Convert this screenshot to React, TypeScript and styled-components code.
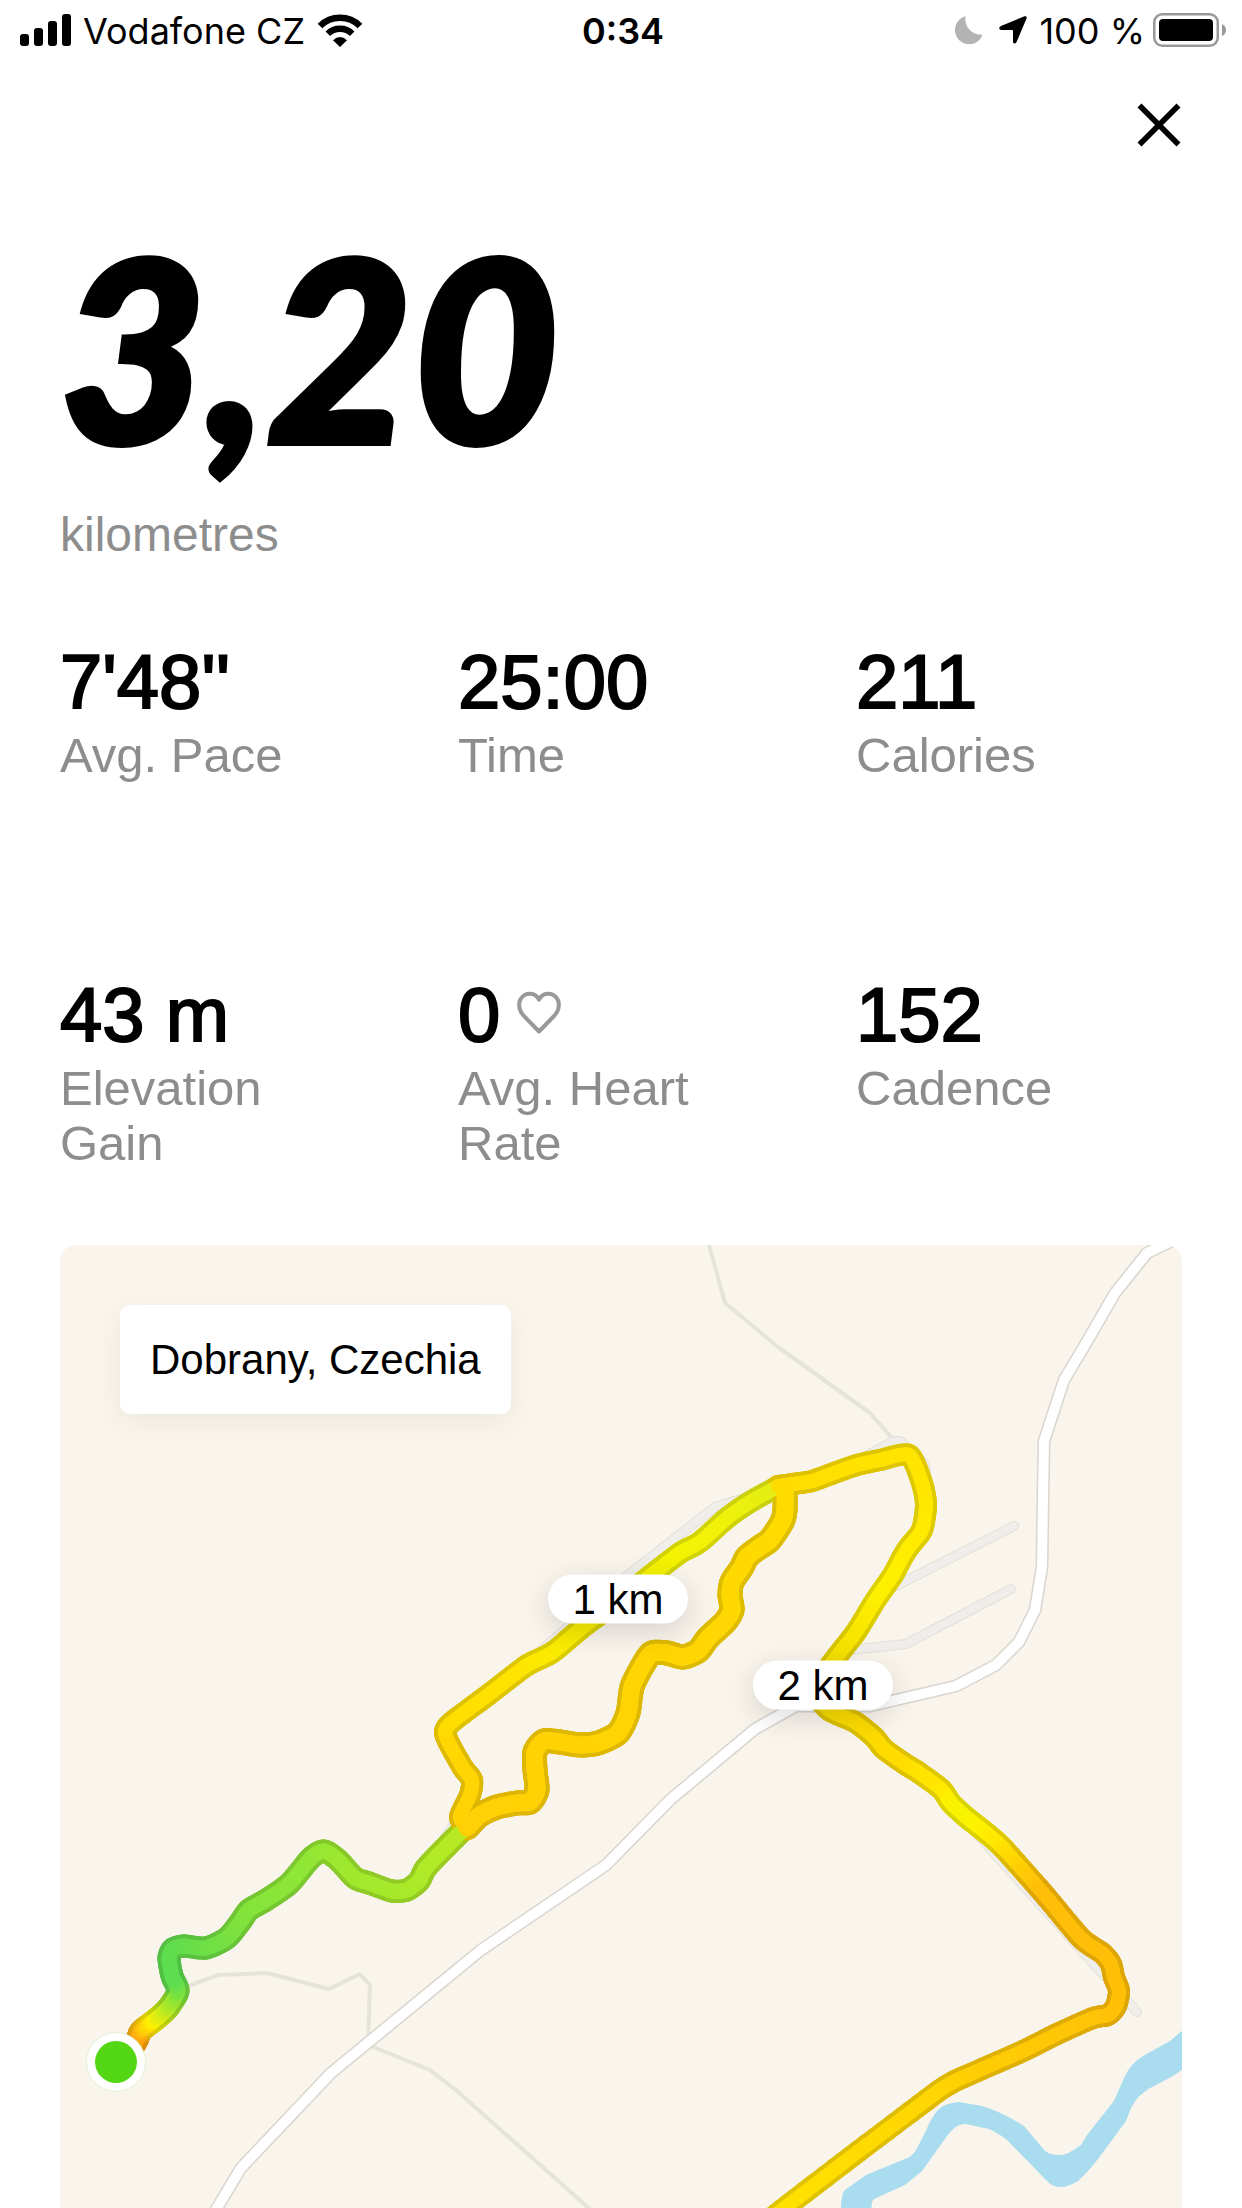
import React from "react";
import styled, { createGlobalStyle } from "styled-components";

const GlobalStyle = createGlobalStyle`
  *, *::before, *::after { box-sizing: border-box; }
  body {
    margin: 0;
    background: #ffffff;
    color: #000000;
    font-family: "Liberation Sans", Arial, sans-serif;
  }
  h1, p, dl, dt, dd { margin: 0; }
`;

const Screen = styled.main`
  display: flex;
  flex-direction: column;
`;

const StatusBar = styled.header`
  display: grid;
  grid-template-columns: 1fr auto 1fr;
  align-items: center;
  height: 64px;
  padding: 0 16px 4px 20px;
  font-family: Inter, sans-serif;
  font-size: 36px;
  line-height: 44px;
`;

const StatusGroup = styled.div<{ $end?: boolean }>`
  display: flex;
  align-items: center;
  justify-content: ${(p) => (p.$end ? "flex-end" : "flex-start")};
  gap: ${(p) => (p.$end ? "8px" : "12px")};
  svg { display: block; flex: none; }
`;

const Indicators = styled.span`
  display: flex;
  gap: 16px;
  margin-right: 4px;
`;

const StatusText = styled.span`
  padding-top: 2px;
`;

const Clock = styled.time`
  padding-top: 2px;
  font-weight: 600;
`;

const Toolbar = styled.div`
  display: flex;
  justify-content: flex-end;
  padding: 30px 52px 62px;
`;

const CloseButton = styled.button`
  display: grid;
  place-items: center;
  width: 62px;
  height: 62px;
  padding: 0;
  border: 0;
  background: none;
  cursor: pointer;
`;

const Content = styled.div`
  display: flex;
  flex-direction: column;
  padding: 0 60px;
`;

const Distance = styled.h1`
  font-family: Lato, sans-serif;
  font-size: 252px;
  font-weight: 900;
  font-style: italic;
  line-height: 256px;
  -webkit-text-stroke: 6px #000000;
`;

const Unit = styled.p`
  margin-top: 33px;
  color: #8d8d8d;
  font-size: 48px;
  line-height: 55px;
`;

const Stats = styled.dl`
  display: grid;
  grid-template-columns: repeat(3, 1fr);
  grid-auto-rows: 1fr;
  column-gap: 72px;
  row-gap: 137px;
  margin-top: 80px;
`;

const Stat = styled.div`
  display: flex;
  flex-direction: column-reverse;
  justify-content: flex-end;
  gap: 6px;
`;

const StatValue = styled.dd`
  display: flex;
  align-items: center;
  gap: 17px;
  font-size: 76px;
  line-height: 80px;
  -webkit-text-stroke: 2px #000000;
`;

const StatLabel = styled.dt`
  padding-right: 40px;
  color: #8d8d8d;
  font-size: 49px;
  line-height: 55px;
`;

const MapCard = styled.section`
  position: relative;
  margin-top: 74px;
  overflow: hidden;
  border-radius: 16px 16px 0 0;
  background: #f9f4ec;
`;

const MapDrawing = styled.svg`
  display: block;
  width: 100%;
  height: auto;
`;

const Place = styled.p`
  position: absolute;
  top: 60px;
  left: 60px;
  padding: 30px;
  border-radius: 10px;
  background: #ffffff;
  box-shadow: 0 8px 30px rgba(0, 0, 0, 0.06);
  font-size: 42px;
  line-height: 49px;
  white-space: nowrap;
`;

const Marker = styled.span`
  position: absolute;
  transform: translate(-50%, -50%);
  min-width: 140px;
  border-radius: 25px;
  background: #ffffff;
  box-shadow: 0 8px 30px rgba(0, 0, 0, 0.14);
  font-size: 42px;
  line-height: 49px;
  text-align: center;
  white-space: nowrap;
`;

const SignalIcon = () => (
  <svg width="51" height="32" viewBox="0 0 51 32" aria-hidden="true">
    <rect x="0" y="20" width="9" height="12" rx="3" />
    <rect x="14" y="14" width="9" height="18" rx="3" />
    <rect x="28" y="7" width="9" height="25" rx="3" />
    <rect x="42" y="0" width="9" height="32" rx="3" />
  </svg>
);

const WifiIcon = () => (
  <svg width="46" height="33" viewBox="0 0 46 33" aria-hidden="true">
    <path d="M3 12 A28.5 28.5 0 0 1 43 12" fill="none" stroke="#000" strokeWidth="6.6" />
    <path d="M10.8 19.8 A17.3 17.3 0 0 1 35.2 19.8" fill="none" stroke="#000" strokeWidth="6.4" />
    <path d="M23 33 L16 26.2 Q23 20 30 26.2 Z" />
  </svg>
);

const MoonIcon = () => (
  <svg width="28" height="28" viewBox="0 0 28 28" aria-hidden="true">
    <path d="M10.6 0.3 A14.2 14.2 0 1 0 27.6 18.6 A15.6 15.6 0 0 1 10.6 0.3 Z" fill="#b3b3b3" />
  </svg>
);

const LocationIcon = () => (
  <svg width="28" height="28" viewBox="0 0 28 28" aria-hidden="true">
    <path d="M25.5 0.3 Q28.4 -0.2 27.5 2.6 L17.6 26 Q16.8 27.8 15 27.4 Q14 27 14 25.5 V15 Q14 14 13 14 H2.3 Q0.3 13.8 0.2 12.2 Q0.2 10.8 2 10 Z" />
  </svg>
);

const BatteryIcon = () => (
  <svg width="73" height="34" viewBox="0 0 73 34" aria-hidden="true">
    <rect x="1.25" y="1.25" width="63.5" height="31.5" rx="8" fill="none" stroke="#999" strokeWidth="2.5" />
    <rect x="6" y="6" width="54" height="22" rx="4" />
    <path d="M69 11 Q73 13 73 17 Q73 21 69 23 Z" fill="#999" />
  </svg>
);

const CloseIcon = () => (
  <svg width="44" height="44" viewBox="0 0 44 44" aria-hidden="true">
    <path d="M2.5 2.5 L41.5 41.5 M41.5 2.5 L2.5 41.5" stroke="#000" strokeWidth="5.6" />
  </svg>
);

const HeartIcon = () => (
  <svg width="44" height="48" viewBox="0 0 44 48" aria-hidden="true">
    <path
      d="M22 40.5 L6.5 24.5 C1 18.5 0.8 10 5.5 5.6 C10.3 1 18.5 1.8 22 8.6 C25.5 1.8 33.7 1 38.5 5.6 C43.2 10 43 18.5 37.5 24.5 Z"
      fill="none"
      stroke="#999"
      strokeWidth="4"
      strokeLinejoin="round"
    />
  </svg>
);

type RoutePoint = [number, number, string?];
type Rgb = [number, number, number];

/* A point may carry a pace colour; colours between those points are blended. */
const WARM_UP: RoutePoint[] = [
  [128, 2056, "#ff8c00"], [137, 2040, "#ff9808"], [141, 2031, "#ffad10"], [155, 2020, "#fff000"],
  [168, 2008, "#c4ea1c"], [178, 1991, "#80e23c"], [172, 1976, "#5cdd52"], [169, 1958],
  [173, 1949], [184, 1946, "#62dd4c"], [206, 1948], [227, 1938], [241, 1921, "#7ee23e"],
  [249, 1910], [266, 1900], [289, 1884], [311, 1858, "#90e636"], [324, 1851], [338, 1860],
  [355, 1878, "#a0e82e"], [369, 1883], [392, 1891], [407, 1890], [419, 1881],
  [426, 1868, "#aeea28"], [446, 1847], [466, 1827, "#b8ea22"],
];

const FIRST_KM: RoutePoint[] = [
  [468, 1828, "#ffd006"], [460, 1817], [470, 1795], [472, 1780], [463, 1768], [450, 1745],
  [445, 1732, "#ffd802"], [452, 1722], [488, 1695], [523, 1668, "#ffe400"], [533, 1662],
  [553, 1652, "#fcea00"], [583, 1627], [617, 1602], [650, 1576, "#f4f200"], [680, 1553],
  [700, 1542], [727, 1518, "#f0f208"], [750, 1502], [777, 1487, "#e4ee14"],
];

const LOOP: RoutePoint[] = [
  [785, 1487, "#ffdc00"], [785, 1510], [782, 1522], [770, 1540], [760, 1547], [747, 1557],
  [742, 1567], [732, 1582], [730, 1595], [732, 1610], [725, 1622], [708, 1638], [698, 1651],
  [683, 1657, "#ffd602"], [667, 1653], [652, 1653], [643, 1665], [632, 1687], [628, 1713],
  [618, 1733], [598, 1743], [580, 1745], [560, 1742], [544, 1741], [535, 1752], [535, 1770],
  [537, 1790], [530, 1802], [517, 1803], [497, 1807], [480, 1815], [467, 1828, "#ffd006"],
];

const SECOND_KM: RoutePoint[] = [
  [778, 1486, "#ffdc00"], [793, 1484], [812, 1481], [834, 1473], [857, 1465], [880, 1460],
  [909, 1455, "#ffe400"], [922, 1483], [926, 1505], [922, 1530], [909, 1547],
  [902, 1558], [893, 1575], [875, 1601, "#fff000"], [856, 1632], [832, 1663], [815, 1690, "#f0d800"],
  [829, 1710], [855, 1722, "#fcdc00"], [874, 1737], [884, 1749], [905, 1764, "#ffdc00"],
  [918, 1772], [941, 1789, "#ffe600"], [951, 1803, "#fff000"], [966, 1817, "#f6f400"],
  [985, 1832, "#fff200"], [1003, 1848, "#ffe600"], [1043, 1893, "#ffbe08"], [1081, 1938],
  [1102, 1953], [1111, 1964], [1114, 1977], [1119, 1991], [1116, 2006], [1108, 2015, "#ffc008"],
  [1093, 2018], [1057, 2034], [1023, 2051, "#ffc806"], [973, 2073], [955, 2081, "#ffd004"],
  [940, 2090], [916, 2108], [851, 2157, "#ffda02"], [782, 2210, "#ffe200"], [750, 2236],
];

const toRgb = (hex: string): Rgb => [1, 3, 5].map((i) => parseInt(hex.slice(i, i + 2), 16)) as Rgb;
const toCss = (c: Rgb, k = 1) => `rgb(${c.map((v) => Math.round(v * k)).join(",")})`;

function blendedColours(points: RoutePoint[]): Rgb[] {
  const stops = points.flatMap((p, i) => (p[2] ? [{ i, c: toRgb(p[2]) }] : []));
  return points.map((_, i) => {
    const before = [...stops].reverse().find((s) => s.i <= i) ?? stops[0];
    const after = stops.find((s) => s.i >= i) ?? before;
    if (after.i === before.i) return before.c;
    const t = (i - before.i) / (after.i - before.i);
    return before.c.map((v, n) => v + (after.c[n] - v) * t) as Rgb;
  });
}

const TANGENT = 0.36;

/* Cardinal spline, cut into short pieces that each take one colour. */
function smooth(points: RoutePoint[], steps = 8) {
  const colours = blendedColours(points);
  const out: { x: number; y: number; c: Rgb }[] = [];
  for (let i = 0; i < points.length - 1; i++) {
    const a = points[Math.max(i - 1, 0)];
    const b = points[i];
    const c = points[i + 1];
    const d = points[Math.min(i + 2, points.length - 1)];
    for (let s = 0; s <= steps; s++) {
      if (s === steps && i < points.length - 2) continue;
      const t = s / steps;
      const t2 = t * t;
      const t3 = t2 * t;
      const at = (n: 0 | 1) =>
        (2 * t3 - 3 * t2 + 1) * b[n] +
        (t3 - 2 * t2 + t) * TANGENT * (c[n] - a[n]) +
        (3 * t2 - 2 * t3) * c[n] +
        (t3 - t2) * TANGENT * (d[n] - b[n]);
      out.push({ x: at(0), y: at(1), c: colours[i].map((v, n) => v + (colours[i + 1][n] - v) * t) as Rgb });
    }
  }
  return out;
}

const LEGS = [
  { points: smooth(WARM_UP), width: 23 },
  { points: smooth(FIRST_KM), width: 22 },
  { points: smooth(SECOND_KM), width: 22 },
  { points: smooth(LOOP), width: 25 },
];

const Strokes = ({ inset, shade }: { inset: number; shade: number }) => (
  <g strokeLinecap="round">
    {LEGS.map((leg, l) =>
      leg.points.slice(1).map((p, i) => (
        <line
          key={`${l}-${i}`}
          x1={leg.points[i].x}
          y1={leg.points[i].y}
          x2={p.x}
          y2={p.y}
          stroke={toCss(p.c, shade)}
          strokeWidth={leg.width - inset}
        />
      ))
    )}
  </g>
);

const TRACKS = [
  "M927 1480 L925 1464 L900 1441 L894 1441 L862 1458 L790 1484 L715 1507 L611 1588 L560 1634 L452 1728",
  "M462 1812 L430 1860",
  "M1014 1526 L880 1594",
  "M1011 1589 L906 1644 L850 1650",
  "M975 1832 L1137 2012",
];
const MAIN_ROAD =
  "M1190 1232 L1147 1253 L1115 1293 L1085 1345 L1064 1380 L1044 1441 L1043 1497 L1042 1567 L1035 1610 L1019 1642 L996 1665 L956 1686 L870 1706 L796 1706 L755 1729 L671 1799 L606 1865 L481 1950 L331 2073 L241 2168 L217 2208 L200 2238";
const FOOTPATHS = [
  "M706 1235 L709 1245 L725 1303 L778 1347 L870 1413 L893 1439",
  "M180 1989 L218 1975 L267 1973 L329 1989 L360 1974 L370 1985 L368 2045 L430 2070 L457 2091 L600 2218",
];
const RIVER =
  "M1190 2024 L1170 2041 L1143 2056 Q1130 2064 1124 2078 L1114 2101 L1087 2135 L1081 2145 Q1068 2155 1060 2155 Q1050 2155 1045 2151 L1024 2126 Q1002 2112 982 2106 L959 2102 Q944 2103 937 2111 Q929 2122 926 2131 L916 2150 Q912 2157 905 2159 L866 2175 L845 2190 Q841 2194 841 2210 L872 2210 Q870 2200 876 2198 L905 2185 L922 2171 L947 2136 Q956 2123 966 2124 L989 2129 Q1000 2134 1008 2141 L1049 2183 Q1060 2192 1078 2181 Q1090 2170 1101 2155 L1126 2121 L1131 2108 Q1136 2098 1143 2093 Q1149 2088 1156 2085 L1173 2076 L1190 2064 Z";

const RouteMap = () => (
  <MapDrawing viewBox="60 1245 1122 963" role="img" aria-label="Map of the run, coloured by pace">
    <path d={RIVER} fill="#a8dcee" />
    <g fill="none" strokeLinejoin="round">
      <g stroke="#e5e4d8" strokeWidth="4">
        {FOOTPATHS.map((d) => <path key={d} d={d} />)}
      </g>
      <g strokeLinecap="round">
        {TRACKS.map((d) => <path key={d} d={d} stroke="#e3e0d9" strokeWidth="10" />)}
        {TRACKS.map((d) => <path key={d + "f"} d={d} stroke="#efeeea" strokeWidth="8" />)}
      </g>
      <path d={MAIN_ROAD} stroke="#d9d5cf" strokeWidth="13" />
      <path d={MAIN_ROAD} stroke="#ffffff" strokeWidth="10" />
    </g>
    <Strokes inset={0} shade={0.87} />
    <Strokes inset={8} shade={1} />
    <circle cx="116" cy="2062" r="29.5" fill="#ffffff" stroke="#cfeebb" strokeWidth="0.6" />
    <circle cx="116" cy="2062" r="21" fill="#53d714" />
  </MapDrawing>
);

const STATS: { value: string; label: string; heart?: boolean }[] = [
  { value: "7'48''", label: "Avg. Pace" },
  { value: "25:00", label: "Time" },
  { value: "211", label: "Calories" },
  { value: "43 m", label: "Elevation Gain" },
  { value: "0", label: "Avg. Heart Rate", heart: true },
  { value: "152", label: "Cadence" },
];

const KM_MARKERS = [
  { label: "1 km", x: 558, y: 354 },
  { label: "2 km", x: 763, y: 440 },
];

export default function App() {
  return (
    <>
      <GlobalStyle />
      <Screen>
        <StatusBar>
          <StatusGroup>
            <SignalIcon />
            <StatusText>Vodafone CZ</StatusText>
            <WifiIcon />
          </StatusGroup>
          <Clock>0:34</Clock>
          <StatusGroup $end>
            <Indicators>
              <MoonIcon />
              <LocationIcon />
            </Indicators>
            <StatusText>100 %</StatusText>
            <BatteryIcon />
          </StatusGroup>
        </StatusBar>
        <Toolbar>
          <CloseButton type="button" aria-label="Close">
            <CloseIcon />
          </CloseButton>
        </Toolbar>
        <Content>
          <Distance>3,20</Distance>
          <Unit>kilometres</Unit>
          <Stats>
            {STATS.map((s) => (
              <Stat key={s.label}>
                <StatLabel>{s.label}</StatLabel>
                <StatValue>
                  {s.value}
                  {s.heart && <HeartIcon />}
                </StatValue>
              </Stat>
            ))}
          </Stats>
          <MapCard>
            <RouteMap />
            <Place>Dobrany, Czechia</Place>
            {KM_MARKERS.map((m) => (
              <Marker
                key={m.label}
                style={{ left: `${(m.x / 1122) * 100}%`, top: `${(m.y / 963) * 100}%` }}
              >
                {m.label}
              </Marker>
            ))}
          </MapCard>
        </Content>
      </Screen>
    </>
  );
}
